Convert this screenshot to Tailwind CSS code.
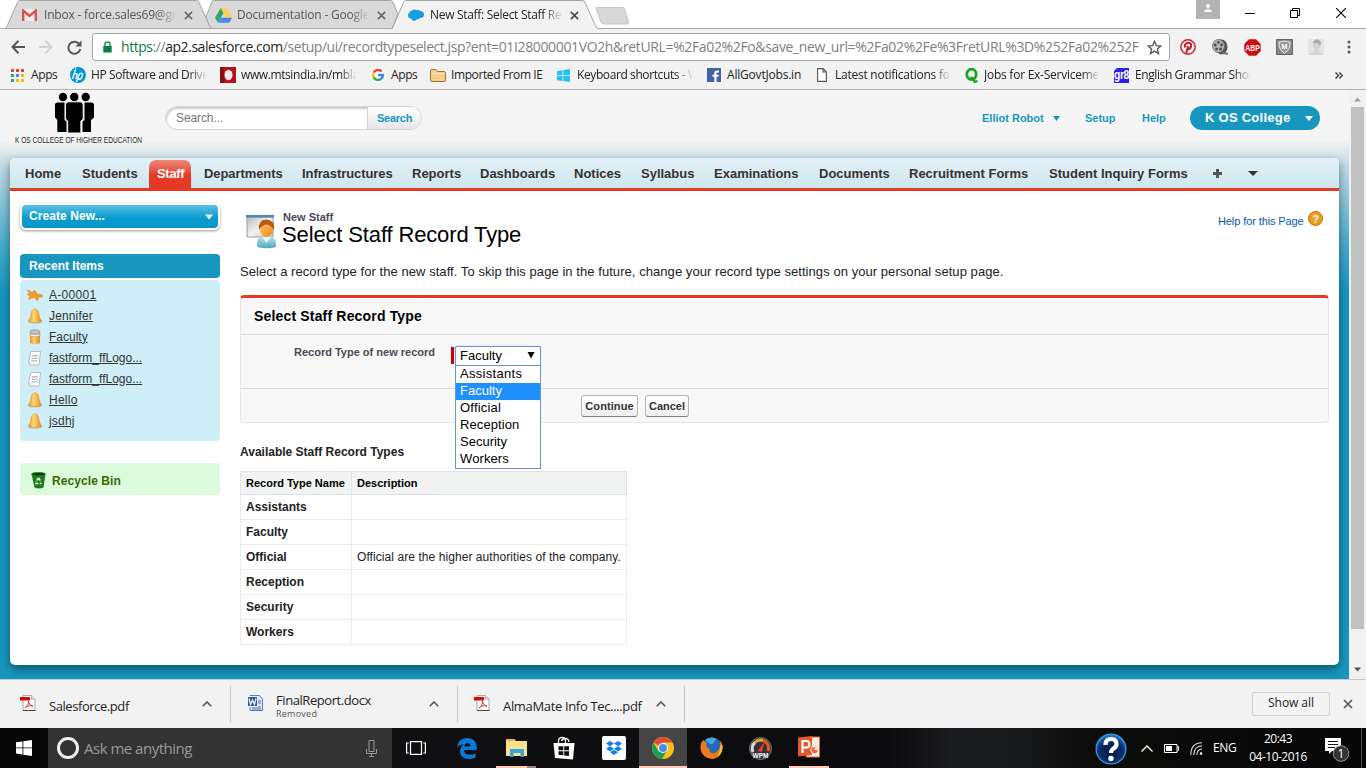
<!DOCTYPE html>
<html lang="en">
<head>
<meta charset="utf-8">
<title>New Staff: Select Staff Record Type</title>
<script src="https://cdn.jsdelivr.net/npm/@tailwindcss/browser@4"></script>
</head>
<body class="w-[1366px] h-[768px] overflow-hidden flex flex-col bg-white font-['Liberation_Sans',Arial,sans-serif] text-[#222] leading-none whitespace-nowrap">
<svg class="absolute w-0 h-0">
  <defs>
    <linearGradient id="gold" x1="0" x2="1"><stop offset="0" stop-color="#e8921c"/><stop offset=".4" stop-color="#ffd877"/><stop offset="1" stop-color="#e48a12"/></linearGradient>
    <linearGradient id="teal" x1="0" y1="0" x2="0" y2="1"><stop offset="0" stop-color="#bfe6ec"/><stop offset="1" stop-color="#4fa8bb"/></linearGradient>
    <linearGradient id="grey" x1="0" y1="0" x2="1" y2="1"><stop offset="0" stop-color="#b5b8bb"/><stop offset=".5" stop-color="#f1f2f3"/><stop offset="1" stop-color="#c5c8ca"/></linearGradient>
    <linearGradient id="face" x1="0" y1="0" x2="1" y2="1"><stop offset="0" stop-color="#ffc46a"/><stop offset="1" stop-color="#f08a1a"/></linearGradient>
    <radialGradient id="orb" cx=".5" cy=".6" r=".6"><stop offset="0" stop-color="#061640"/><stop offset=".7" stop-color="#0c2f73"/><stop offset="1" stop-color="#2a8fe0"/></radialGradient>
    <symbol id="bell" viewBox="0 0 16 16"><ellipse cx="8" cy="14" rx="7.500" ry="1.600" fill="#8d9aa0" opacity=".5"/><path d="M8 .8c2.600 0 3.400 2.200 3.900 5.200.4 2.600.9 4.700 2.600 6.200 0 1.600-3 2.200-6.500 2.200s-6.500-.6-6.500-2.200C3.200 10.700 3.700 8.600 4.100 6 4.600 3 5.400.8 8 .8z" fill="url(#gold)" stroke="#d98a1e" stroke-width=".5"/></symbol>
    <symbol id="page" viewBox="0 0 16 16"><path d="M4 1.500h9.500l-1.500 13.500H2.500L1.500 12z" fill="#fcfcfc" stroke="#a9adb0" stroke-width=".8"/><path d="M1.500 12l3 .2-.5 2.800z" fill="#d0d3d5"/><path d="M5 5.500l2 .6 2-.6 2 .6M4.700 8l2 .6 2-.6 2 .6M4.500 10.500l2 .6 2-.6 2 .6" stroke="#8b9094" stroke-width=".8" fill="none"/></symbol>
    <symbol id="pdf" viewBox="0 0 16 16"><path d="M3 .5h8.500L15 4v11.500H3z" fill="#fafafa" stroke="#9a9a9a" stroke-width=".8"/><path d="M11.500.5V4H15" fill="#e4e4e4" stroke="#9a9a9a" stroke-width=".7"/><rect x="0" y="2" width="10" height="3.500" fill="#cf0d0d"/><path d="M8.500 6c.3 3-1.500 6-3.500 7 1.500-2 5-3 8-2-2.500-.2-4-2-4.500-5z" stroke="#e0252b" fill="none" stroke-width=".9"/><path d="M3 15.500h12.500" stroke="#444" stroke-width="1"/></symbol>
    <symbol id="cross" viewBox="0 0 10 10"><path d="M1 1l8 8M9 1l-8 8" stroke="currentColor" stroke-width="1.700"/></symbol>
    <symbol id="up" viewBox="0 0 10 6"><path d="M.8 5.200L5 1l4.200 4.200" fill="none" stroke="#555" stroke-width="1.600"/></symbol>
    <symbol id="tri" viewBox="0 0 10 6"><path d="M0 0h10L5 6z" fill="currentColor"/></symbol>
  </defs>
</svg>

<!-- tab strip -->
<header class="relative h-[28px] shrink-0 bg-white flex font-['Open_Sans','Noto_Sans',sans-serif] text-[12px] tracking-[-0.2px]">
  <svg class="absolute left-0 top-0" width="640" height="29" viewBox="0 0 640 29">
    <path d="M0 28.500H640" stroke="#a9a9a9"/>
    <path d="M6 28.500L17.500 2.500Q18.300.5 20 .5H196.500Q198.300.5 199 2.500L211 28.500z" fill="#d9d9d9" stroke="#a5a5a5"/>
    <path d="M206 17L211.500 3Q212.300.5 214 .5H390.500Q392.300.5 393 2.500L398 14 392 28.500H213.500Q210.500 28.500 209.500 26z" fill="#d9d9d9" stroke="#a5a5a5"/>
    <path d="M392 29L403.500 2.500Q404.300.5 406 .5H582.500Q584.300.5 585 2.500L596 27Q597 28.500 599 29z" fill="#f2f2f2" stroke="#a5a5a5"/>
    <path d="M393 28.700H597" stroke="#f2f2f2" stroke-width="1.500"/>
    <path d="M596 8.500Q594.500 7.500 596.500 7.500H622Q624 7.500 624.700 9L628.500 22Q628.800 24 627 24H604Q602 24 601 22z" fill="#d8d8d8" stroke="#c6c6c6"/>
  </svg>
  <div class="relative w-[193px] ml-[22px] flex items-center pt-[2px]">
    <svg width="15" height="12" viewBox="0 0 15 12"><path d="M0 0h15v12H0z" fill="#f3eeee"/><path d="M1.200 12V1.500L7.500 7l6.300-5.500V12" fill="none" stroke="#d9534a" stroke-width="2.400"/></svg>
    <span class="ml-[7px] w-[133px] overflow-hidden text-[#555] [mask-image:linear-gradient(to_right,black_85%,transparent)] leading-[18px]">Inbox - force.sales69@gr</span>
    <svg class="ml-[7px] text-[#666]" width="9" height="9"><use href="#cross"/></svg>
  </div>
  <div class="relative w-[193px] flex items-center pt-[2px]">
    <svg width="17" height="15" viewBox="0 0 17 15"><path d="M5.600 0h5.600L17 9.500h-5.500z" fill="#ffd04b"/><path d="M5.600 0L0 9.700l2.900 5L8.500 5z" fill="#35a668"/><path d="M5.700 9.700H17l-2.900 5H2.900z" fill="#4c86ee"/></svg>
    <span class="ml-[5px] w-[133px] overflow-hidden text-[#555] [mask-image:linear-gradient(to_right,black_85%,transparent)] leading-[18px]">Documentation - Google</span>
    <svg class="ml-[7px] text-[#666]" width="9" height="9"><use href="#cross"/></svg>
  </div>
  <div class="relative w-[193px] flex items-center pt-[2px]">
    <svg width="16" height="12" viewBox="0 0 16 12"><path d="M4 1.500Q6-.3 8 1.200 10.500-.2 12 2q4 0 4 3.500T12 9q-1 1.500-3 1.200Q7.500 12.500 5 11.500 3.500 11 3.200 9.500.3 9.500 0 6.500 0 4.500 1.500 3.500 2 1.800 4 1.500z" fill="#139fdb"/></svg>
    <span class="ml-[6px] w-[133px] overflow-hidden text-[#222] tracking-[-0.3px] [mask-image:linear-gradient(to_right,black_85%,transparent)] leading-[18px]">New Staff: Select Staff Re</span>
    <svg class="ml-[7px] text-[#444]" width="9" height="9"><use href="#cross"/></svg>
  </div>
  <div class="ml-auto flex items-start">
    <svg width="24" height="19" viewBox="0 0 24 19"><path d="M0 0h24v19H0z" fill="#b3b3b3"/><circle cx="12" cy="6" r="2" fill="#fff"/><path d="M8 12q0-3 4-3t4 3z" fill="#fff"/></svg>
    <svg class="ml-[25px] mt-[13px]" width="10" height="1"><path d="M0 0h10v1H0z" fill="#000"/></svg>
    <svg class="ml-[35px] mt-[8px]" width="10" height="10" viewBox="0 0 10 10" fill="none" stroke="#000"><path d="M.5 2.500h7v7h-7zM2.500 2.500v-2h7v7h-2"/></svg>
    <svg class="ml-[36px] mr-[20px] mt-[8px]" width="10" height="10"><path d="M0 0l10 10M10 0L0 10" stroke="#000" stroke-width="1.100"/></svg>
  </div>
</header>

<!-- toolbar -->
<div class="h-[62px] shrink-0 bg-[#f2f2f2] border-b border-[#b4b4b4] flex flex-col font-['Open_Sans','Noto_Sans',sans-serif]">
  <div class="h-px bg-[#a9a9a9] w-[392px]"></div>
  <div class="h-px -mt-px ml-[598px] bg-[#a9a9a9]"></div>
  <div class="h-[36px] flex items-center">
    <svg class="ml-[11px]" width="14" height="14" viewBox="0 0 14 14" fill="none" stroke="#555" stroke-width="2"><path d="M7.500.8L1.500 7l6 6.200M1.500 7H14"/></svg>
    <svg class="ml-[14px]" width="14" height="14" viewBox="0 0 14 14" fill="none" stroke="#d2d2d2" stroke-width="2"><path d="M6.500.8L12.500 7l-6 6.200M12.500 7H0"/></svg>
    <svg class="ml-[14px]" width="15" height="15" viewBox="0 0 15 15"><path d="M12.300 4.200A6 6 0 1 0 13.300 9" fill="none" stroke="#555" stroke-width="2"/><path d="M14.500.5v6h-6z" fill="#555"/></svg>
    <div class="ml-[10px] w-[1078px] h-[28px] bg-white border border-[#a6a6a6] rounded-[3px] flex items-center text-[14px]">
      <svg class="ml-[10px]" width="9" height="12" viewBox="0 0 9 12"><path d="M.3 5h8.400v6.500H.3z" fill="#0b8043"/><path d="M2 5V3q0-2.200 2.500-2.200T7 3v2" fill="none" stroke="#0b8043" stroke-width="1.300"/></svg>
      <span class="ml-[9px] w-[1021px] leading-[22px] text-[#808080] flex tracking-[-0.45px]"><span class="text-[#0b8043]">https</span><span>://</span><span class="text-[#222]">ap2.salesforce.com</span><span>/setup/ui/recordtypeselect.jsp</span><span class="tracking-[-0.36px]">?ent=01I28000001VO2h&amp;retURL=%2Fa02%2Fo&amp;save_new_url=%2Fa02%2Fe%3FretURL%3D%252Fa02%252F</span></span>
      <svg class="ml-[5px]" width="15" height="15" viewBox="0 0 15 15"><path d="M7.500 1.300l1.800 4.300 4.600.4-3.500 3 1.100 4.600-4-2.500-4 2.500L4.600 9l-3.500-3 4.600-.4z" fill="none" stroke="#555" stroke-width="1.300"/></svg>
    </div>
    <svg class="ml-[10px]" width="16" height="16" viewBox="0 0 16 16"><circle cx="8" cy="8" r="7.200" fill="#fff" stroke="#cb2027" stroke-width="1.500"/><path d="M6.200 14.500L8 7M5.300 8.500Q3.800 5 7.200 3.900 11 3.200 11.200 6.300 11 10 8.600 10.100L7.400 9.400" fill="none" stroke="#cb2027" stroke-width="2.100"/></svg>
    <svg class="ml-[16px]" width="17" height="16" viewBox="0 0 17 16"><ellipse cx="9.500" cy="8" rx="6" ry="7.500" fill="#555"/><ellipse cx="6.500" cy="7" rx="6" ry="6.500" fill="#b5b5b5" stroke="#666" stroke-width=".8"/><g fill="#4a4a4a"><circle cx="6.500" cy="3.300" r="1.400"/><circle cx="3.300" cy="6" r="1.400"/><circle cx="9.600" cy="6" r="1.400"/><circle cx="4.500" cy="10" r="1.400"/><circle cx="8.500" cy="10" r="1.400"/></g><path d="M11 14l5 1" stroke="#777" stroke-width="2"/></svg>
    <svg class="ml-[15px]" width="17" height="17" viewBox="0 0 17 17"><path d="M5 .3h7L16.700 5v7L12 16.700H5L.3 12V5z" fill="#d00b0b"/><text x="8.500" y="11.600" font-size="8.500" font-weight="bold" fill="#fff" text-anchor="middle" textLength="14.500" lengthAdjust="spacingAndGlyphs" font-family="Liberation Sans">ABP</text></svg>
    <svg class="ml-[15px]" width="17" height="16" viewBox="0 0 17 16"><path d="M.5.500h16v15H.5z" fill="#888" stroke="#666"/><path d="M3 3q3 0 5.500-1Q11 3 14 3q.5 8-5.500 11Q2.500 11 3 3z" fill="#999" stroke="#eee"/><text x="8.500" y="10" font-size="7" font-weight="bold" fill="#fff" text-anchor="middle" font-family="Liberation Sans">M</text></svg>
    <svg class="ml-[15px]" width="16" height="16" viewBox="0 0 16 16"><path d="M0 0h16v16H0z" fill="#e4e4e4"/><path d="M5 4q0-3.500 4-3.500t4 4q0 4-2.500 5.500L10 12l5 4H1l5-3V9Q5 7 5 4z" fill="#d2d2d2"/><path d="M5 4Q6 .5 9 .5t4 3.500l-1 3q-1-3-3-3T5 4z" fill="#aaa"/></svg>
    <svg class="ml-[23px]" width="4" height="14" viewBox="0 0 4 14" fill="#555"><circle cx="2" cy="2" r="1.500"/><circle cx="2" cy="7" r="1.500"/><circle cx="2" cy="12" r="1.500"/></svg>
  </div>
  <!-- bookmarks -->
  <div class="mt-px h-[18px] flex items-center text-[12px] text-[#222] leading-[18px] tracking-[-0.4px]">
    <svg class="ml-[11px] mr-[7px]" width="13" height="13" viewBox="0 0 13 13"><path d="M0 0h3v3H0zM5 0h3v3H5zM10 0h3v3h-3z" fill="#ea4335"/><path d="M0 5h3v3H0z" fill="#34a853"/><path d="M5 5h3v3H5z" fill="#4285f4"/><path d="M10 5h3v3h-3zM5 10h3v3H5zM10 10h3v3h-3z" fill="#fbbc05"/><path d="M0 10h3v3H0z" fill="#34a853"/></svg>
    <span class="w-[39px]">Apps</span>
    <svg class="mr-[5px]" width="16" height="16" viewBox="0 0 16 16"><circle cx="8" cy="8" r="8" fill="#0096d6"/><path d="M5.800 1.500L2.500 12M4.200 7.500Q7.500 5.500 7 8L5.800 12M9.500 6.500L6.500 15M9.500 6.500h2.300q1.300 0 .7 1.800l-.8 2.200q-.5 1.500-1.800 1.500H8" fill="none" stroke="#fff" stroke-width="1.300"/></svg>
    <span class="w-[116px] mr-[13px] overflow-hidden [mask-image:linear-gradient(to_right,black_85%,transparent)]">HP Software and Drive</span>
    <svg class="mr-[5px]" width="16" height="16" viewBox="0 0 16 16"><path d="M0 0h16v16H0z" fill="#b3121b"/><path d="M0 0h4v16H0z" fill="#8a0c12"/><ellipse cx="8.500" cy="8" rx="4" ry="5.300" fill="#f0ecec"/></svg>
    <span class="w-[116px] mr-[13px] overflow-hidden [mask-image:linear-gradient(to_right,black_85%,transparent)]">www.mtsindia.in/mbla</span>
    <svg class="mr-[5px]" width="16" height="16" viewBox="0 0 16 16" fill="none" stroke-width="2.500"><circle cx="8" cy="8" r="8" fill="#fff"/><path d="M11.700 4.500A5 5 0 0 0 3.700 5.500" stroke="#ea4335"/><path d="M3.700 5.500a5 5 0 0 0 0 5" stroke="#fbbc05"/><path d="M3.700 10.500a5 5 0 0 0 7.500 1.300" stroke="#34a853"/><path d="M11.200 11.800A5 5 0 0 0 13 8H8" stroke="#4285f4"/></svg>
    <span class="w-[39px]">Apps</span>
    <svg class="mr-[5px]" width="16" height="13" viewBox="0 0 16 13"><path d="M.5 2Q.5.500 2 .5h4L7.500 2.500H14q1.500 0 1.500 1.500v7q0 1.500-1.500 1.500H2Q.5 12.500.5 11z" fill="#f7cf84" stroke="#9a713a"/><path d="M1 4.500h14" stroke="#fde7b8"/></svg>
    <span class="w-[106px]">Imported From IE</span>
    <svg class="mr-[7px]" width="13" height="13" viewBox="0 0 13 13" fill="#27c1f5"><path d="M0 2l5.500-.8v5H0zM6.300 1L13 0v6.200H6.300zM0 7h5.500v5L0 11.200zM6.300 7H13v6l-6.700-.9z"/></svg>
    <span class="w-[116px] mr-[14px] overflow-hidden [mask-image:linear-gradient(to_right,black_85%,transparent)]">Keyboard shortcuts - W</span>
    <svg class="mr-[6px]" width="14" height="14" viewBox="0 0 14 14"><path d="M0 0h14v14H0z" fill="#4562a7"/><path d="M9.500 14V8.700h2l.3-2H9.500V5.400q0-1 1-1H12V2.500h-2Q7.300 2.500 7.300 5v1.700H5.500v2h1.800V14z" fill="#fff"/></svg>
    <span class="w-[90px] tracking-[-0.2px]">AllGovtJobs.in</span>
    <svg class="mr-[8px]" width="10" height="14" viewBox="0 0 10 14"><path d="M.6.600h5.400L9.400 4v9.400H.6zM6 .6V4h3.400" fill="#fff" stroke="#555" stroke-width="1.100"/></svg>
    <span class="w-[116px] mr-[14px] overflow-hidden [mask-image:linear-gradient(to_right,black_85%,transparent)] tracking-[-0.25px]">Latest notifications for</span>
    <svg class="mr-[6px]" width="13" height="15" viewBox="0 0 13 15"><ellipse cx="6.500" cy="6.300" rx="4.700" ry="5.200" fill="none" stroke="#16a81e" stroke-width="2.800"/><path d="M5.500 9.500q3.500.5 4 4.500l3-1" fill="none" stroke="#16a81e" stroke-width="2.300"/></svg>
    <span class="w-[116px] mr-[14px] overflow-hidden [mask-image:linear-gradient(to_right,black_85%,transparent)] tracking-[-0.25px]">Jobs for Ex-Serviceme</span>
    <svg class="mr-[6px]" width="15" height="15" viewBox="0 0 15 15"><path d="M3 0h12v15H0V3z" fill="#2c1ff2"/><text x="7.500" y="10.500" font-size="12" font-weight="bold" fill="#fff" text-anchor="middle" font-family="Liberation Sans" textLength="15" lengthAdjust="spacingAndGlyphs">gr8</text></svg>
    <span class="w-[116px] overflow-hidden [mask-image:linear-gradient(to_right,black_85%,transparent)]">English Grammar Shor</span>
    <svg class="ml-[84px]" width="8" height="7" viewBox="0 0 8 7" fill="none" stroke="#444" stroke-width="1.500"><path d="M.5.500l3 3-3 3M4.300.5l3 3-3 3"/></svg>
  </div>
</div>

<!-- viewport -->
<div class="h-[589px] shrink-0 flex">
  <div class="w-[1349px] h-full px-[10px] bg-[linear-gradient(to_bottom,#f5f5f5_0px,#f5f5f5_50px,#c8dde4_72px,#8cc6da_110px,#3fa9cc_160px,#1797c0_202px,#1797c0_589px)] overflow-hidden">
    <div class="h-[68px] flex items-start">
      <svg class="ml-[4px] mt-[2px]" width="129" height="54" viewBox="0 0 129 54"><g fill="#000"><circle cx="49" cy="5" r="4.200"/><circle cx="71.700" cy="5" r="4.200"/><path d="M41 13Q41 10.500 43.500 10.500H50.500V28l2 1.500V40H43.300V28L41 25.500zM80 13Q80 10.500 77.500 10.500H70.500V28l-2 1.500V40H77V28l3-2.500z"/></g><g fill="#000" stroke="#f5f5f5" stroke-width="1"><circle cx="60.300" cy="5" r="4.700"/><path d="M51.500 13Q51.500 9.800 54.500 9.800H66Q69.200 9.800 69.200 13V27l-2.300 2V41H53.700V29l-2.200-2z"/></g><text x="1" y="51" font-size="9.700" fill="#222" textLength="127" lengthAdjust="spacingAndGlyphs" font-family="Liberation Sans">K OS COLLEGE OF HIGHER EDUCATION</text></svg>
      <div class="ml-[22px] mt-[16px] w-[257px] h-[24px] rounded-full border border-[#d4d4d4] flex overflow-hidden bg-white">
        <span class="w-[202px] pl-[10px] leading-[23px] text-[12px] text-[#777] border-r border-[#d4d4d4] rounded-l-full shadow-[inset_1px_2px_2px_#ccc] tracking-[-0.1px]">Search...</span>
        <span class="flex-1 pl-[9px] leading-[22px] text-[11px] font-bold text-[#1797c0] bg-gradient-to-b from-white to-[#e6e6e6] tracking-[-0.25px]">Search</span>
      </div>
      <div class="ml-auto mt-[16px] h-[24px] flex items-center text-[11px] font-bold text-[#1797c0]">
        <span class="w-[71px]">Elliot Robot</span>
        <svg class="mr-[25px]" width="7" height="5" viewBox="0 0 7 5"><path d="M0 0h7L3.500 5z" fill="#1797c0"/></svg>
        <span class="w-[57px]">Setup</span>
        <span class="w-[48px]">Help</span>
        <span class="w-[130px] h-[24px] mr-[19px] rounded-full bg-[#1797c0] text-white text-[13px] flex items-center pl-[15px]"><span class="w-[100px] pb-px tracking-[0.26px]">K OS College</span><svg width="8" height="5"><use href="#tri"/></svg></span>
      </div>
    </div>

    <main class="h-[507px] rounded-[5px] bg-white shadow-[0_4px_10px_rgba(0,0,0,0.45)] flex flex-col">
      <nav class="h-[33px] shrink-0 rounded-t-[5px] border-b-[3px] border-[#e33b26] bg-gradient-to-b from-[#e3f1f6] to-[#cde7ef] flex items-center text-[13px] font-bold text-[#333] pl-[15px]">
        <span class="w-[57px]">Home</span>
        <span class="w-[67px]">Students</span>
        <span class="w-[42px] h-[28px] self-end mr-[13px] rounded-t-[7px] bg-[linear-gradient(to_bottom,#ee8a7c,#e33b26_55%)] text-white flex items-center pl-[8px] pb-[2px] tracking-[-0.3px]">Staff</span>
        <span class="w-[98px] tracking-[-0.08px]">Departments</span>
        <span class="w-[110px] tracking-[-0.08px]">Infrastructures</span>
        <span class="w-[68px]">Reports</span>
        <span class="w-[94px]">Dashboards</span>
        <span class="w-[67px]">Notices</span>
        <span class="w-[73px]">Syllabus</span>
        <span class="w-[105px]">Examinations</span>
        <span class="w-[90px]">Documents</span>
        <span class="w-[140px]">Recruitment Forms</span>
        <span class="w-[164px]">Student Inquiry Forms</span>
        <svg width="9" height="9"><path d="M3 0h3v3h3v3H6v3H3V6H0V3h3z" fill="#555"/></svg>
        <svg class="ml-[26px]" width="10" height="5"><path d="M0 0h10L5 5z" fill="#333"/></svg>
      </nav>

      <div class="flex-1 flex">
        <aside class="w-[200px] ml-[10px] flex flex-col">
          <div class="mt-[12px] h-[27px] shrink-0 p-[2px] rounded-[6px] bg-white shadow-[0_1px_3px_rgba(0,0,0,0.4)]">
            <div class="h-[23px] rounded-[4px] bg-[linear-gradient(to_bottom,#5fc0e3,#0a9ccf_55%,#0996c9)] text-white font-bold text-[12px] flex items-center pl-[7px]"><span class="pb-[2px] tracking-[0.08px]">Create New...</span><svg class="ml-auto mr-[5px]" width="8" height="6"><use href="#tri"/></svg></div>
          </div>
          <div class="mt-[24px] h-[24px] shrink-0 rounded-[4px] bg-[#1797c0] text-white font-bold text-[12px] flex items-center pl-[9px]">Recent Items</div>
          <div class="mt-[2px] h-[161px] shrink-0 rounded-[4px] bg-[#cfeef8] pt-[4px] pl-[7px] text-[12px] text-[#333] underline flex flex-col">
            <div class="h-[21px] flex items-center gap-[6px]"><svg width="16" height="16" viewBox="0 0 16 16"><path d="M.5 3.500L2 3l3.500 3 1-2.500L9 4.500 9.500 7l5 .5 1.300 1.500-1 1.300-3-.8-.3 3-1.800 1L8 10.500l-3 .3-2.500 1.700-.8-.8L3 9 .3 7.800l.7-1 2 .2z" fill="#f39a2b" stroke="#d9801a" stroke-width=".5"/></svg><span class="tracking-[0.3px]">A-00001</span></div>
            <div class="h-[21px] flex items-center gap-[6px]"><svg width="16" height="16"><use href="#bell"/></svg><span class="tracking-[0.15px]">Jennifer</span></div>
            <div class="h-[21px] flex items-center gap-[6px]"><svg width="16" height="16" viewBox="0 0 16 16"><path d="M3 3h10v11q-5 2.500-10 0z" fill="url(#gold)"/><path d="M3 7q5 2 10 0v-2H3z" fill="#f3ead8" stroke="#b07a30" stroke-width=".5"/><ellipse cx="8" cy="3" rx="5" ry="2.200" fill="#c4c4c4" stroke="#8f8f8f" stroke-width=".7"/></svg><span>Faculty</span></div>
            <div class="h-[21px] flex items-center gap-[6px]"><svg width="16" height="16"><use href="#page"/></svg><span>fastform_ffLogo...</span></div>
            <div class="h-[21px] flex items-center gap-[6px]"><svg width="16" height="16"><use href="#page"/></svg><span>fastform_ffLogo...</span></div>
            <div class="h-[21px] flex items-center gap-[6px]"><svg width="16" height="16"><use href="#bell"/></svg><span class="tracking-[0.25px]">Hello</span></div>
            <div class="h-[21px] flex items-center gap-[6px]"><svg width="16" height="16"><use href="#bell"/></svg><span class="tracking-[0.2px]">jsdhj</span></div>
          </div>
          <div class="mt-[22px] h-[32px] shrink-0 rounded-[4px] bg-[#dcfadc] flex items-center pl-[11px] text-[12px] font-bold text-[#3a6a00] pt-[3px]">
            <svg class="mr-[6px]" width="15" height="17" viewBox="0 0 15 17"><path d="M.5 2h14l-2 13.500q-5 2-9 0z" fill="#197a1c"/><ellipse cx="7.500" cy="2.200" rx="7" ry="1.900" fill="#0c3f10" stroke="#3b9a3b" stroke-width=".7"/><path d="M7.500 5.800l2.500 4M7.500 5.800L5 9.800M4.300 11.500h6.400" stroke="#e8f5e8" stroke-width="1.600" stroke-dasharray="3.200 1.200"/></svg><span class="tracking-[0.08px]">Recycle Bin</span>
          </div>
        </aside>

        <section class="ml-[20px] w-[1089px] flex flex-col">
          <div class="h-[104px] shrink-0 flex flex-col">
            <div class="h-[69px] flex pt-[20px]">
              <svg class="ml-[5px] mt-[3px] shrink-0" width="33" height="35" viewBox="0 0 33 35"><path d="M2 3h26v20H2z" fill="url(#grey)" stroke="#9aa0a4"/><path d="M1 1h28v2.500H1z" fill="#4b8db2"/><path d="M12.500 33Q10 23 19 22h5q8 1 7 11-9 2.500-18.500 0z" fill="url(#teal)"/><path d="M17 23l4.500 6 4.500-6z" fill="#e9f5f6"/><ellipse cx="21.500" cy="15.500" rx="6.500" ry="7.500" fill="url(#face)"/><path d="M14 16Q12.500 6 21.500 5.500q9 .5 7.500 11Q27 11.500 21.500 10.500 16.500 11 14 16z" fill="#b85a12"/></svg>
              <div class="ml-[4px] flex flex-col">
                <span class="text-[11px] font-bold text-[#4a4a56] leading-[12px] ml-[1px]">New Staff</span>
                <h1 class="text-[22px] text-black leading-[24px] tracking-[-0.14px]">Select Staff Record Type</h1>
              </div>
              <div class="ml-auto mr-[6px] h-[16px] flex items-center text-[11px] text-[#015ba7]"><span class="w-[90px] pt-[4px] tracking-[-0.1px]">Help for this Page</span><svg class="-mt-px" width="15" height="15" viewBox="0 0 15 15"><circle cx="7.500" cy="7.500" r="7" fill="#ef9c1b" stroke="#b57316"/><text x="7.500" y="11.500" font-size="11" font-weight="bold" fill="#fff" text-anchor="middle" font-family="Liberation Sans">?</text></svg></div>
            </div>
            <p class="text-[13px] leading-[23px] tracking-[0.06px]">Select a record type for the new staff. To skip this page in the future, change your record type settings on your personal setup page.</p>
          </div>

          <div class="h-[128px] shrink-0 rounded-[4px] border border-[#e6e6e6] border-t-[3px] border-t-[#e33b26] bg-[#f8f8f8] flex flex-col">
            <h2 class="h-[37px] pl-[13px] text-[14px] font-bold text-black leading-[36px] border-b border-[#dbdbdb] tracking-[0.17px]">Select Staff Record Type</h2>
            <div class="h-[54px] flex border-b border-[#dbdbdb]">
              <label class="w-[210px] pl-[53px] text-[11px] font-bold text-[#4a4a56] leading-[35px]">Record Type of new record</label>
              <span class="w-[3px] h-[17px] mt-[12px] bg-[#cc0000]"></span>
              <div class="relative w-[86px] h-[20px] ml-px mt-[11px] border border-[#6c93d0] rounded-[2px] bg-white shadow-[0_0_1px_#6c93d0] text-[13px] text-black flex items-center pl-[4px] pb-[2px]">
                <span>Faculty</span><svg class="ml-auto mr-[5px]" width="8" height="7" viewBox="0 0 8 7"><path d="M.5 0h7L4 6.500z"/></svg>
                <ul class="absolute z-10 -left-px top-[18px] w-[86px] h-[104px] bg-white border border-[#6c93d0] leading-[17px]">
                  <li class="pl-[4px] h-[17px] leading-[15px] tracking-[0.3px]">Assistants</li>
                  <li class="pl-[4px] h-[17px] leading-[15px] bg-[#1e90ff] text-white">Faculty</li>
                  <li class="pl-[4px] h-[17px] leading-[15px] tracking-[0.2px]">Official</li>
                  <li class="pl-[4px] h-[17px] leading-[15px] tracking-[0.1px]">Reception</li>
                  <li class="pl-[4px] h-[17px] leading-[15px]">Security</li>
                  <li class="pl-[4px] h-[17px] leading-[15px] tracking-[0.1px]">Workers</li>
                </ul>
              </div>
            </div>
            <div class="flex-1 flex items-start pt-[6px] pl-[340px] gap-[7px] text-[11px] font-bold text-[#333] leading-[20px]">
              <button class="w-[57px] h-[22px] border border-[#b5b5b5] border-b-[#7f7f7f] rounded-[3px] bg-gradient-to-b from-white to-[#efefef] tracking-[0.1px]">Continue</button>
              <button class="w-[44px] h-[22px] border border-[#b5b5b5] border-b-[#7f7f7f] rounded-[3px] bg-gradient-to-b from-white to-[#efefef]">Cancel</button>
            </div>
          </div>

          <h3 class="mt-[17px] mb-[7px] text-[12px] font-bold leading-[24px]">Available Staff Record Types</h3>
          <table class="w-[387px] border-collapse border border-[#e0e3e5] text-[12px] text-left table-fixed">
            <colgroup><col class="w-[111px]"><col></colgroup>
            <thead><tr class="h-[23px] bg-[#f2f3f3] text-[11px] text-black"><th class="p-0 pl-[5px] border border-[#e0e3e5]">Record Type Name</th><th class="p-0 pl-[5px] border border-[#e0e3e5]">Description</th></tr></thead>
            <tbody>
              <tr class="h-[25px]"><th class="p-0 pl-[5px] border border-[#ececec]">Assistants</th><td class="border border-[#ececec]"></td></tr>
              <tr class="h-[25px]"><th class="p-0 pl-[5px] border border-[#ececec]">Faculty</th><td class="border border-[#ececec]"></td></tr>
              <tr class="h-[25px]"><th class="p-0 pl-[5px] border border-[#ececec]">Official</th><td class="p-0 pl-[5px] border border-[#ececec] tracking-[0.07px]">Official are the higher authorities of the company.</td></tr>
              <tr class="h-[25px]"><th class="p-0 pl-[5px] border border-[#ececec]">Reception</th><td class="border border-[#ececec]"></td></tr>
              <tr class="h-[25px]"><th class="p-0 pl-[5px] border border-[#ececec]">Security</th><td class="border border-[#ececec]"></td></tr>
              <tr class="h-[25px]"><th class="p-0 pl-[5px] border border-[#ececec]">Workers</th><td class="border border-[#ececec]"></td></tr>
            </tbody>
          </table>
        </section>
      </div>
    </main>
  </div>
  <div class="w-[17px] bg-[#f1f1f1] flex flex-col items-center">
    <svg class="mt-[7px] mb-[5px] text-[#a0a0a0] rotate-180" width="7" height="5"><use href="#tri"/></svg>
    <div class="w-[13px] h-[522px] bg-[#c1c1c1]"></div>
    <svg class="mt-auto mb-[7px] text-[#505050]" width="7" height="5"><use href="#tri"/></svg>
  </div>
</div>

<!-- download shelf -->
<div class="h-[49px] shrink-0 bg-[#f2f2f2] border-t border-[#c9c9c9] flex items-center font-['Open_Sans','Noto_Sans',sans-serif] text-[13px] text-[#222] leading-[18px] tracking-[-0.43px]">
  <svg class="ml-[20px] -mt-[2px]" width="16" height="16"><use href="#pdf"/></svg>
  <span class="ml-[13px] mt-[4px] w-[153px]">Salesforce.pdf</span>
  <svg width="10" height="6"><use href="#up"/></svg>
  <div class="ml-[18px] w-px h-[36px] bg-[#c4c4c4]"></div>
  <svg class="ml-[16px] -mt-[2px]" width="16" height="16" viewBox="0 0 16 16"><path d="M3 .5h9.500L15.500 4v11.500H3z" fill="#dbe6f6" stroke="#5b7bb5"/><path d="M9 6h5M9 8h5M5 12h9M5 14h9" stroke="#4f74b3"/><path d="M.5 1.500h10v10H.5z" fill="#2c5ba8" stroke="#f0f4fa"/><path d="M2 3.500l1.500 6L5.500 5l2 4.500L9 3.500" fill="none" stroke="#fff" stroke-width="1.200"/></svg>
  <span class="ml-[13px] mt-[4px] w-[153px] flex flex-col"><span class="leading-[14px]">FinalReport.docx</span><span class="text-[9px] leading-[13px] text-[#555] tracking-[0.25px]">Removed</span></span>
  <svg width="10" height="6"><use href="#up"/></svg>
  <div class="ml-[18px] w-px h-[36px] bg-[#c4c4c4]"></div>
  <svg class="ml-[16px] -mt-[2px]" width="16" height="16"><use href="#pdf"/></svg>
  <span class="ml-[13px] mt-[4px] w-[153px] tracking-[-0.34px]">AlmaMate Info Tec....pdf</span>
  <svg width="10" height="6"><use href="#up"/></svg>
  <div class="ml-[18px] w-px h-[36px] bg-[#c4c4c4]"></div>
  <div class="ml-auto w-[78px] h-[24px] -mt-[1px] border border-[#d0d0d0] rounded-[2px] bg-[#f4f4f4] text-center text-[12px] leading-[20px] tracking-[-0.05px]">Show all</div>
  <svg class="ml-[13px] mr-[13px] -mt-px text-[#555]" width="10" height="10"><use href="#cross"/></svg>
</div>

<!-- taskbar -->
<footer class="h-[40px] shrink-0 bg-[linear-gradient(to_right,#060606,#101013_30%,#0b0b0d_65%,#1b1c1f_70%,#17181a_75%,#0c0c0b_80%,#060606)] flex items-center text-white font-['Open_Sans','Noto_Sans',sans-serif] text-[12px]">
  <svg class="ml-[16px]" width="16" height="16" viewBox="0 0 16 16" fill="#fff"><path d="M0 2.300l6.500-.9v6.100H0zM7.300 1.300L16 0v7.500H7.300zM0 8.300h6.500v6.200L0 13.600zM7.300 8.300H16V16l-8.700-1.200z"/></svg>
  <div class="ml-[16px] w-[344px] h-full bg-[#333] flex items-center">
    <span class="ml-[9px] w-[22px] h-[22px] rounded-full border-[3px] border-[#f0f0f0]"></span>
    <span class="ml-[5px] w-[282px] text-[15px] text-[#999] leading-[20px] tracking-[-0.5px]">Ask me anything</span>
    <svg width="11" height="17" viewBox="0 0 11 17" fill="none" stroke="#999"><path d="M3 .5h5v11H3zM.5 9v4.500h10V9M5.500 13.500V16M3 16.500h5"/></svg>
  </div>
  <svg class="ml-[14px]" width="20" height="14" viewBox="0 0 20 14" fill="none" stroke="#fff" stroke-width="1.200"><path d="M4.500.6h11v12.800h-11zM2.800 2H.6v10h2.200M17.200 2h2.200v10h-2.200"/></svg>
  <svg class="ml-[31px]" width="20" height="21" viewBox="0 0 20 21"><path d="M0 9Q1.500 0 10.500 0 19.500.5 19.800 9v3H7q.3 4.500 5.500 4.800 3.500 0 6-1.600v4.200Q15.500 21 12 21 3.300 20.700 3 13.200 3.200 8.500 7 6.500 2.500 6.200 0 9zm7.300-.6h6.200Q13.500 5 10.500 5 7.800 5.200 7.300 8.400z" fill="#0a7ad8"/></svg>
  <div class="ml-[19px] w-[40px] h-[40px] flex flex-col items-center"><svg class="mt-[10px]" width="21" height="20" viewBox="0 0 21 20"><path d="M0 1h8l2 2h11v15H0z" fill="#fbe08d"/><path d="M0 1h8l2 2H1z" fill="#e8b84a"/><path d="M4 19v-8h14v8h-3.500v-4h-7v4z" fill="#33a6dc"/></svg><div class="mt-auto w-full h-[2px] bg-[linear-gradient(to_right,#fbc9b4_78%,#9a8379_78%)]"></div></div>
  <svg class="ml-[17px]" width="22" height="24" viewBox="0 0 22 24"><path d="M5.500 7V5q0-3.500 3.500-3.500t3.500 3.500v2M8.500 5q1-2.500 4-2.500T16 6" fill="none" stroke="#fff" stroke-width="1.300"/><path d="M.5 7h21L20 23.500 2 22z" fill="#fff"/><path d="M5.500 10.200h4.800v4H5.500zM11.200 10.200H16v4h-4.800zM5.500 15.200h4.800v4.100l-4.800-.5zM11.200 15.200H16v4.800l-4.800-.6z" fill="#111"/></svg>
  <svg class="ml-[27px]" width="24" height="24" viewBox="0 0 24 24"><rect width="24" height="24" rx="2" fill="#fff"/><path d="M8 5l4 2.600-4 2.600-4-2.600zM16 5l4 2.600-4 2.600-4-2.600zM8 10.200l4 2.600-4 2.600-4-2.600zM16 10.200l4 2.600-4 2.600-4-2.600zM8 16.300l4-2.600 4 2.600-4 2.700z" fill="#1080e8"/></svg>
  <div class="ml-[13px] w-[48px] h-[40px] bg-[#454545] flex flex-col items-center"><svg class="mt-[9px]" width="22" height="22" viewBox="0 0 22 22"><circle cx="11" cy="11" r="11" fill="#fbc116"/><path d="M11 11L1.500 5.500A11 11 0 0 1 20.500 5.500H11z" fill="#dd4b3e"/><path d="M1.500 5.500A11 11 0 0 0 10 22l5-8.500-8.700.5z" fill="#1d9d58"/><circle cx="11" cy="11" r="5" fill="#fff"/><circle cx="11" cy="11" r="4" fill="#4a8bf4"/></svg><div class="mt-auto w-full h-[2px] bg-[#fbc9b4]"></div></div>
  <svg class="ml-[13px]" width="23" height="22" viewBox="0 0 23 22"><circle cx="12" cy="10.800" r="10.300" fill="#2468b8"/><path d="M5 3Q10-1 16 1.500q-1 4-5 6z" fill="#4ba3df"/><path d="M1.500 5Q-1 12 2.500 17 7 22.500 14 21.800q8-2 8.500-10.800 0-5-2.500-7.500 1 6.500-2 10-3 3.500-6.500 2.500-3-1.500-1.800-4L7 10.500Q5.500 7 7 5.500 4 5 3.500 3z" fill="#ec7a1c"/><path d="M22.500 8q.5 8-6 12.500 4-5 4-12z" fill="#f9c62c"/></svg>
  <svg class="ml-[26px]" width="23" height="23" viewBox="0 0 23 23"><circle cx="11.500" cy="11.500" r="11" fill="#333" stroke="#777"/><path d="M4 15a8 8 0 0 1 2-9.500" stroke="#d7dbe0" stroke-width="3" fill="none"/><path d="M6 5.500a8 8 0 0 1 8-2" stroke="#e9a33b" stroke-width="3" fill="none"/><path d="M14 3.500A8 8 0 0 1 19 14" stroke="#e75a1c" stroke-width="3" fill="none"/><path d="M9 14L15.500 4.500 13 15z" fill="#f33"/><text x="11.500" y="20.500" font-size="6.500" font-weight="bold" fill="#fff" text-anchor="middle" font-family="Liberation Sans">WPM</text></svg>
  <div class="ml-[17px] w-[40px] h-[40px] flex flex-col items-center"><svg class="mt-[8px]" width="22" height="22" viewBox="0 0 22 22"><path d="M12 1h9.500v20H8z" fill="#f8ece6" stroke="#e0693d"/><path d="M0 1.500L14 0v19L0 20.500z" fill="#e1582a"/><path d="M4.500 17V5h3.500q3.500 0 3.500 3.300T8 11.700H4.500" fill="none" stroke="#fff" stroke-width="2.200"/><circle cx="16.500" cy="14" r="3.800" fill="#e9673a" stroke="#fff"/><path d="M16.500 14v-4a4 4 0 0 1 4 4z" fill="#fbd9c8"/></svg><div class="mt-auto w-full h-[2px] bg-[#fbc9b4]"></div></div>
  <svg class="ml-auto mt-[2px]" width="32" height="32" viewBox="0 0 32 32"><circle cx="16" cy="16" r="14.900" fill="url(#orb)" stroke="#2d9be8" stroke-width="1.200"/><path d="M10.500 12Q10.500 6 16 6t5.500 5q0 3-3 4.500-2.500 1.500-2.500 4.500" fill="none" stroke="#fff" stroke-width="4.200"/><circle cx="16" cy="25.500" r="2.700" fill="#fff"/></svg>
  <svg class="ml-[14px]" width="12" height="7" viewBox="0 0 12 7"><path d="M.5 6.500L6 1l5.500 5.500" fill="none" stroke="#fff" stroke-width="1.300"/></svg>
  <svg class="ml-[11px]" width="15" height="9" viewBox="0 0 15 9"><path d="M.5.500h12.500v8H.5zM13.500 2.500h1v4h-1" fill="none" stroke="#fff"/><path d="M2 2h6v5H2z" fill="#fff"/></svg>
  <svg class="ml-[11px]" width="13" height="13" viewBox="0 0 13 13" fill="none" stroke="#ddd"><path d="M.8 13Q.8 1 12 .8M3.800 13Q4 4.200 12 3.800M6.800 13q.2-5.800 5.200-6" stroke-width="1.100"/><circle cx="11" cy="11.500" r="1.300" fill="#fff" stroke="none"/></svg>
  <span class="ml-[10px] w-[35px] leading-[18px] tracking-[-0.3px]">ENG</span>
  <span class="w-[60px] flex flex-col items-center leading-[18px] tracking-[-0.5px]"><span>20:43</span><span>04-10-2016</span></span>
  <svg class="ml-[17px] mr-[11px] mt-[4px]" width="25" height="24" viewBox="0 0 25 24"><path d="M0 0h16v13H7l-3 3v-3H0z" fill="#fff"/><path d="M3 3.500h10M3 6.500h10M3 9.500h7" stroke="#111"/><circle cx="16" cy="15.500" r="7.800" fill="#333" stroke="#999"/><text x="16" y="19.500" font-size="12" fill="#fff" text-anchor="middle" font-family="Open Sans">1</text></svg>
  <span class="w-px h-full bg-[#555] mr-[4px]"></span>
</footer>
</body>
</html>
